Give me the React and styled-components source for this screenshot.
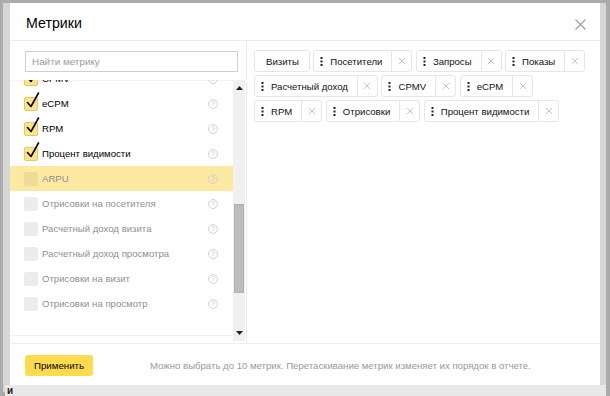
import React, { useLayoutEffect, useRef } from "react";
import styled, { createGlobalStyle } from "styled-components";

const GlobalStyle = createGlobalStyle`
  html, body { margin: 0; padding: 0; background: #fff; }
  body { font-family: "Liberation Sans", Arial, sans-serif; }
  * { box-sizing: border-box; }
`;

const Frame = styled.div`
  width: 610px;
  height: 396px;
  border-style: solid;
  border-color: #ababab;
  border-width: 3px 4px 4px 3px;
  background: #d6d6d6;
  padding: 0 6px 0 7px;
  display: flex;
  flex-direction: column;
`;

const Modal = styled.div`
  height: 382px;
  background: #fff;
  display: flex;
  flex-direction: column;
`;

const PageStrip = styled.div`
  flex: 1;
  display: flex;
  align-items: center;
  font-size: 10px;
  font-weight: bold;
  color: #222;
  margin-left: -5px;
  margin-right: -6px;
  padding-left: 2px;
  background: #e8e8e8;
`;

const Header = styled.div`
  height: 38px;
  border-bottom: 1px solid #ececec;
  display: flex;
  align-items: center;
  justify-content: space-between;
  padding: 0 14px 0 16px;
`;

const Title = styled.div`
  font-size: 14.2px;
  color: #000;
  padding-top: 2px;
`;

const Close = styled.svg`
  width: 11px;
  height: 11px;
  margin-top: 6px;
`;

const Body = styled.div`
  flex: 1;
  display: flex;
  min-height: 0;
`;

const LeftCol = styled.div`
  width: 237px;
  border-right: 1px solid #ececec;
  display: flex;
  flex-direction: column;
`;

const SearchWrap = styled.div`
  padding: 10px 8px 8px 15px;
`;

const Search = styled.input`
  width: 100%;
  height: 21px;
  border: 1px solid #cfcfcf;
  padding: 0 6px;
  font-family: "Liberation Sans", Arial, sans-serif;
  font-size: 9.9px;
  outline: none;
  &::placeholder { color: #9a9a9a; }
`;

const ListArea = styled.div`
  flex: 1;
  display: flex;
  min-height: 0;
  padding-bottom: 2px;
`;

const Viewport = styled.div`
  flex: 1;
  overflow: hidden;
  box-shadow: inset 0 1px 0 #f2f2f2;
`;

const Row = styled.div`
  height: 25px;
  display: flex;
  align-items: center;
  padding: 0 15px 0 14px;
  gap: 4px;
  background: ${(p) => (p.$hover ? "#fde9a1" : "transparent")};
`;

const Box = styled.div`
  position: relative;
  width: 14px;
  height: 14px;
  border-radius: 2px;
  flex: none;
  background: ${(p) => (p.$checked ? "#fde38a" : p.$hover ? "#efdc9a" : "#ececec")};
  border: 1px solid ${(p) => (p.$checked ? "#e3c766" : p.$hover ? "#efdc9a" : "#ececec")};
`;

const Tick = styled.svg`
  position: absolute;
  left: 1px;
  top: -6px;
  width: 14px;
  height: 17px;
`;

const Label = styled.span`
  flex: 1;
  font-size: 9.6px;
  color: ${(p) => (p.$checked ? "#000" : "#8f8f8f")};
  white-space: nowrap;
`;

const Help = styled.span`
  width: 10px;
  height: 10px;
  border: 1px solid #d2d2d2;
  border-radius: 50%;
  font-size: 7px;
  line-height: 8px;
  text-align: center;
  color: #c4c4c4;
  flex: none;
`;

const ListEnd = styled.div`
  height: 20px;
  border-bottom: 1px solid #f0f0f0;
`;

const Scrollbar = styled.div`
  width: 12px;
  margin-right: 1px;
  background: #f0f0f0;
  display: flex;
  flex-direction: column;
`;

const Arrow = styled.div`
  height: 16px;
  display: flex;
  align-items: center;
  justify-content: center;
`;

const Track = styled.div`
  flex: 1;
  padding: 0 1px;
`;

const Thumb = styled.div`
  margin-top: ${(p) => p.$top}px;
  height: ${(p) => p.$h}px;
  background: #bdbdbd;
  border: 1px solid #b0b0b0;
`;

const RightCol = styled.div`
  flex: 1;
  padding: 9px 6px 0 7px;
  display: flex;
  flex-wrap: wrap;
  align-content: flex-start;
  gap: 3px 3.5px;
`;

const Chip = styled.div`
  height: 22px;
  border: 1px solid #e6e6e6;
  border-radius: 3px;
  display: flex;
  align-items: stretch;
  font-size: 9.6px;
  color: #111;
`;

const ChipMain = styled.div`
  display: flex;
  align-items: center;
  gap: 7px;
  padding: ${(p) => (p.$fixed ? "0 10px 0 11px" : "0 9px 0 6px")};
`;

const Handle = styled.svg`
  width: 3px;
  height: 9px;
`;

const ChipClose = styled.div`
  width: 20px;
  border-left: 1px solid #e6e6e6;
  display: flex;
  align-items: center;
  justify-content: center;
`;

const Footer = styled.div`
  height: 42px;
  border-top: 1px solid #efefef;
  display: flex;
  align-items: center;
  padding: 0 0 0 15px;
  gap: 57px;
`;

const Apply = styled.button`
  height: 21px;
  width: 68px;
  border: none;
  border-radius: 3px;
  background: #ffdb4d;
  font-family: "Liberation Sans", Arial, sans-serif;
  font-size: 9.7px;
  color: #000;
  padding: 0;
  margin-top: 1px;
`;

const Hint = styled.span`
  font-size: 9.6px;
  color: #999;
  margin-top: 2px;
`;

const metrics = [
  ["Визиты", true],
  ["Посетители", true],
  ["Запросы", true],
  ["Показы", true],
  ["Расчетный доход", true],
  ["Отрисовки", true],
  ["CPMV", true],
  ["eCPM", true],
  ["RPM", true],
  ["Процент видимости", true],
  ["ARPU", false, true],
  ["Отрисовки на посетителя", false],
  ["Расчетный доход визита", false],
  ["Расчетный доход просмотра", false],
  ["Отрисовки на визит", false],
  ["Отрисовки на просмотр", false],
];

const chips = [
  ["Визиты", true],
  ["Посетители"],
  ["Запросы"],
  ["Показы"],
  ["Расчетный доход"],
  ["CPMV"],
  ["eCPM"],
  ["RPM"],
  ["Отрисовки"],
  ["Процент видимости"],
];

const X = ({ size = 8, color = "#b5b5b5", w = 1 }) => (
  <svg width={size} height={size} viewBox="0 0 10 10">
    <path d="M1 1L9 9M9 1L1 9" stroke={color} strokeWidth={w} fill="none" />
  </svg>
);

const DragDots = () => (
  <Handle viewBox="0 0 3 9">
    <rect x="0.5" y="0" width="2" height="2" fill="#222" />
    <rect x="0.5" y="3.5" width="2" height="2" fill="#222" />
    <rect x="0.5" y="7" width="2" height="2" fill="#222" />
  </Handle>
);

export default function App() {
  const vp = useRef(null);
  useLayoutEffect(() => {
    if (vp.current) vp.current.scrollTop = 164;
  }, []);
  return (
    <>
      <GlobalStyle />
      <Frame>
        <Modal>
          <Header>
            <Title>Метрики</Title>
            <Close viewBox="0 0 11 11">
              <path d="M0.5 0.5L10.5 10.5M10.5 0.5L0.5 10.5" stroke="#9e9e9e" strokeWidth="1.1" fill="none" />
            </Close>
          </Header>
          <Body>
            <LeftCol>
              <SearchWrap>
                <Search placeholder="Найти метрику" />
              </SearchWrap>
              <ListArea>
                <Viewport ref={vp}>
                  {metrics.map(([name, checked, hover]) => (
                    <Row key={name} $hover={hover}>
                      <Box $checked={checked} $hover={hover}>
                        {checked && (
                          <Tick viewBox="0 0 14 17">
                            <path d="M1.5 10.5L5 14.5L12.5 1" stroke="#000" strokeWidth="1.6" fill="none" strokeLinecap="round" strokeLinejoin="round" />
                          </Tick>
                        )}
                      </Box>
                      <Label $checked={checked}>{name}</Label>
                      <Help>?</Help>
                    </Row>
                  ))}
                  <ListEnd />
                  <div style={{ height: 40 }} />
                </Viewport>
                <Scrollbar>
                  <Arrow>
                    <svg width="7" height="4" viewBox="0 0 7 4"><path d="M0 4L3.5 0L7 4Z" fill="#222" /></svg>
                  </Arrow>
                  <Track>
                    <Thumb $top={108} $h={89} />
                  </Track>
                  <Arrow>
                    <svg width="7" height="4" viewBox="0 0 7 4"><path d="M0 0L3.5 4L7 0Z" fill="#222" /></svg>
                  </Arrow>
                </Scrollbar>
              </ListArea>
            </LeftCol>
            <RightCol>
              {chips.map(([name, fixed]) => (
                <Chip key={name}>
                  <ChipMain $fixed={fixed}>
                    {!fixed && <DragDots />}
                    <span>{name}</span>
                  </ChipMain>
                  {!fixed && (
                    <ChipClose>
                      <X />
                    </ChipClose>
                  )}
                </Chip>
              ))}
            </RightCol>
          </Body>
          <Footer>
            <Apply>Применить</Apply>
            <Hint>Можно выбрать до 10 метрик. Перетаскивание метрик изменяет их порядок в отчете.</Hint>
          </Footer>
        </Modal>
        <PageStrip>
          <span>и</span>
        </PageStrip>
      </Frame>
    </>
  );
}
